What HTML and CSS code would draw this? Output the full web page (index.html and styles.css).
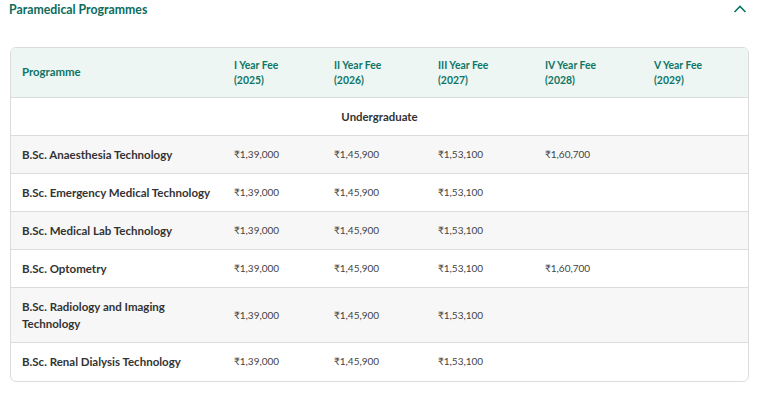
FILE: index.html
```html
<!DOCTYPE html>
<html lang="en">

<head>
    <meta charset="UTF-8">
    <meta name="viewport" content="width=device-width, initial-scale=1.0">
    <title>Paramedical Programmes</title>
    <link rel="stylesheet" href="styles.css">
</head>

<body>
    <div class="accordion">
        <div class="accordion-head">
            <h2>Paramedical Programmes</h2>
            <svg class="chevron" width="14" height="10" viewBox="0 0 14 10">
                <path d="M1.5 8 L7 2.5 L12.5 8" fill="none" stroke="#0b7564" stroke-width="1.6" />
            </svg>
        </div>
        <div class="table-wrap">
            <table class="fee-table">
                <colgroup>
                    <col class="c-name">
                    <col class="c-1">
                    <col class="c-2">
                    <col class="c-3">
                    <col class="c-4">
                    <col>
                </colgroup>
                <thead>
                    <tr>
                        <th class="prog">Programme</th>
                        <th>I Year Fee<br>(2025)</th>
                        <th>II Year Fee<br>(2026)</th>
                        <th>III Year Fee<br>(2027)</th>
                        <th>IV Year Fee<br>(2028)</th>
                        <th>V Year Fee<br>(2029)</th>
                    </tr>
                </thead>
                <tbody>
                    <tr class="group">
                        <td colspan="6">Undergraduate</td>
                    </tr>
                    <tr class="alt">
                        <td class="name">B.Sc. Anaesthesia Technology</td>
                        <td>₹1,39,000</td>
                        <td>₹1,45,900</td>
                        <td>₹1,53,100</td>
                        <td>₹1,60,700</td>
                        <td></td>
                    </tr>
                    <tr>
                        <td class="name">B.Sc. Emergency Medical Technology</td>
                        <td>₹1,39,000</td>
                        <td>₹1,45,900</td>
                        <td>₹1,53,100</td>
                        <td></td>
                        <td></td>
                    </tr>
                    <tr class="alt">
                        <td class="name">B.Sc. Medical Lab Technology</td>
                        <td>₹1,39,000</td>
                        <td>₹1,45,900</td>
                        <td>₹1,53,100</td>
                        <td></td>
                        <td></td>
                    </tr>
                    <tr>
                        <td class="name">B.Sc. Optometry</td>
                        <td>₹1,39,000</td>
                        <td>₹1,45,900</td>
                        <td>₹1,53,100</td>
                        <td>₹1,60,700</td>
                        <td></td>
                    </tr>
                    <tr class="alt">
                        <td class="name">B.Sc. Radiology and Imaging<br>Technology</td>
                        <td>₹1,39,000</td>
                        <td>₹1,45,900</td>
                        <td>₹1,53,100</td>
                        <td></td>
                        <td></td>
                    </tr>
                    <tr class="last">
                        <td class="name">B.Sc. Renal Dialysis Technology</td>
                        <td>₹1,39,000</td>
                        <td>₹1,45,900</td>
                        <td>₹1,53,100</td>
                        <td></td>
                        <td></td>
                    </tr>
                </tbody>
            </table>
        </div>
    </div>
</body>

</html>
```

FILE: styles.css
```css
body {
    margin: 0;
    font-family: 'Lato', 'Noto Sans', sans-serif;
    background-color: #ffffff;
    color: #333;
}

.accordion {
    padding: 0 8px 0 10px;
}

.accordion-head {
    display: flex;
    justify-content: space-between;
    align-items: center;
    height: 18px;
    margin-bottom: 29px;
}

.accordion-head h2 {
    margin: 0 0 0 -1px;
    font-size: 12.3px;
    font-weight: 700;
    color: #0b6b5d;
}

.chevron {
    margin-right: 2px;
    margin-top: -1px;
}

.table-wrap {
    border: 1px solid #dcdcdc;
    border-radius: 6px;
    overflow: hidden;
}

.fee-table {
    width: 100%;
    border-collapse: collapse;
    table-layout: fixed;
}

.c-name {
    width: 212px;
}

.c-1 {
    width: 100px;
}

.c-2 {
    width: 104px;
}

.c-3 {
    width: 107px;
}

.c-4 {
    width: 109px;
}

.fee-table th {
    background-color: #eef6f3;
    color: #0d7566;
    font-size: 10.4px;
    font-weight: 700;
    text-align: left;
    line-height: 14.5px;
    padding: 10px 11px;
    border-bottom: 1px solid #dcdcdc;
}

.fee-table th.prog {
    font-size: 11.4px;
}

.fee-table td {
    font-size: 10px;
    color: #444;
    line-height: 17px;
    padding: 10px 11px;
    border-bottom: 1px solid #dcdcdc;
    vertical-align: middle;
}

.fee-table td.name {
    font-size: 11.5px;
    font-weight: 700;
    color: #333;
}

.fee-table tr.group td {
    text-align: center;
    font-size: 11.4px;
    font-weight: 700;
    color: #333;
}

.fee-table tr.alt td {
    background-color: #f7f7f7;
}

.fee-table tr.last td {
    border-bottom: none;
    padding-bottom: 11px;
}
```
